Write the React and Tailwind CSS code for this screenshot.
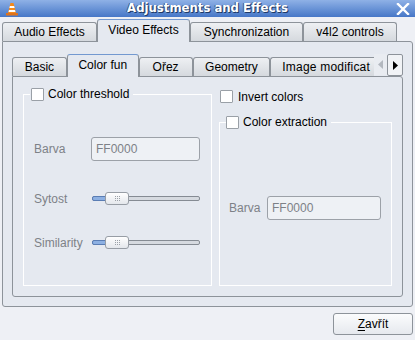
import React from "react";

function VlcIcon() {
  return (
    <svg width="14" height="14" viewBox="0 0 14 14">
      <polygon points="5.5,1 8.5,1 11,11 3,11" fill="#f4891c" />
      <polygon points="4.9,4 9.1,4 9.6,6 4.4,6" fill="#ffffff" />
      <polygon points="4,8 10,8 10.5,10 3.5,10" fill="#ffffff" />
      <rect x="1" y="11" width="12" height="2.5" rx="0.6" fill="#e0731a" />
    </svg>
  );
}

function CloseIcon() {
  return (
    <svg width="14" height="12" viewBox="0 0 14 12">
      <path d="M2 1 L12 11 M12 1 L2 11" stroke="#ffffff" strokeWidth="2.4" strokeLinecap="square" />
    </svg>
  );
}

function Checkbox() {
  return <span className="block h-[13px] w-[13px] shrink-0 rounded-[1px] border border-[#9aa0a7] bg-white" />;
}

function OuterTab({ children, active, className }) {
  if (active) {
    return (
      <div className={`relative z-10 -mb-px flex h-[23px] items-center justify-center rounded-t-[3px] border border-b-0 border-[#8d939a] border-t-[#7399d0] bg-[#e5e9f0] pb-[2px] ${className}`}>
        {children}
      </div>
    );
  }
  return (
    <div className={`flex h-[19px] items-center justify-center rounded-t-[3px] border border-b-0 border-[#8d939a] bg-linear-to-b from-[#eef0f3] to-[#d5d9de] ${className}`}>
      {children}
    </div>
  );
}

function Slider() {
  return (
    <div className="relative h-[13px] w-[108px]">
      <div className="absolute left-0 right-0 top-[4px] h-[5px] rounded-[2px] border border-[#858b93] bg-[#d6dae0]" />
      <div className="absolute left-0 top-[4px] h-[5px] w-[15px] rounded-l-[2px] border border-[#5a7db4] bg-[#8db0e2]" />
      <div className="absolute left-[13px] top-0 flex h-[13px] w-[24px] items-center justify-center rounded-[3px] border border-[#979da5] bg-linear-to-b from-white to-[#e4e7ec]">
        <div className="grid grid-cols-3 gap-[1px]">
          {Array.from({ length: 9 }).map((_, i) => (
            <span key={i} className="block h-[1px] w-[1px] bg-[#9ba1a8]" />
          ))}
        </div>
      </div>
    </div>
  );
}

function TextField({ className }) {
  return (
    <div className={`flex h-[24px] items-center rounded-[3px] border border-[#9ca1a8] bg-[#eef1f5] pl-[4px] text-[#7d8187] ${className}`}>
      FF0000
    </div>
  );
}

export default function App() {
  return (
    <div className="flex h-[340px] w-[415px] flex-col overflow-hidden bg-[#eef0f5] font-['Liberation_Sans',Arial,sans-serif] text-[12px] text-black">
      {/* Title bar */}
      <div className="flex h-[17px] items-center bg-linear-to-b from-[#8fb1e6] to-[#4677c7]">
        <div className="flex w-[22px] justify-center pl-[2px]">
          <VlcIcon />
        </div>
        <div className="flex-1 text-center font-['DejaVu_Sans',sans-serif] text-[11.7px] font-bold text-white [text-shadow:1px_1px_0_#203a66,-1px_0_0_#35578f]">
          Adjustments and Effects
        </div>
        <div className="flex w-[22px] justify-center pr-[2px]">
          <CloseIcon />
        </div>
      </div>

      <div className="flex flex-1 flex-col px-[2px]">
        {/* Outer tabs */}
        <div className="flex h-[24px] items-end">
          <OuterTab className="w-[95px]">Audio Effects</OuterTab>
          <OuterTab active className="w-[93px]">Video Effects</OuterTab>
          <OuterTab className="w-[113px]">Synchronization</OuterTab>
          <OuterTab className="w-[94px]">v4l2 controls</OuterTab>
        </div>

        {/* Outer panel */}
        <div className="flex h-[266px] flex-col rounded-b-[3px] rounded-tr-[3px] border border-[#8d939a] bg-[#e5e9f0] px-[9px] pb-[9px] pt-[11px]">
          {/* Inner tabs */}
          <div className="flex h-[23px] items-end">
            <OuterTab className="w-[55px]">Basic</OuterTab>
            <OuterTab active className="w-[72px]">Color fun</OuterTab>
            <OuterTab className="w-[54px]">Ořez</OuterTab>
            <OuterTab className="w-[78px]">Geometry</OuterTab>
            <div className="flex h-[19px] w-[104px] items-center whitespace-nowrap rounded-tl-[3px] border border-b-0 border-r-0 border-[#8d939a] bg-linear-to-b from-[#eef0f3] to-[#d5d9de] pl-[11px] tracking-[0.2px]">
              Image modificat
            </div>
            <div className="mt-[1px] flex h-[21px] w-[13px] items-center justify-center self-start bg-[#e9ecf1]">
              <svg width="5" height="9" viewBox="0 0 5 9">
                <polygon points="5,0 0,4.5 5,9" fill="#b3b8bf" />
              </svg>
            </div>
            <div className="mt-[1px] flex h-[22px] w-[16px] items-center justify-center self-start rounded-[2px] border border-[#8d939a] bg-[#f1f3f6]">
              <svg width="5" height="9" viewBox="0 0 5 9">
                <polygon points="0,0 5,4.5 0,9" fill="#000000" />
              </svg>
            </div>
          </div>

          {/* Inner panel */}
          <div className="flex h-[221px] gap-[7px] rounded-b-[3px] rounded-tr-[3px] border border-[#8d939a] bg-[#e5e9f0] p-[10px]">
            {/* Color threshold */}
            <fieldset className="flex w-[189px] flex-col border border-white">
              <legend className="ml-[6px] flex h-[14px] items-center gap-[4px] pl-[1px] pr-[4px]">
                <Checkbox />
                <span>Color threshold</span>
              </legend>
              <div className="flex flex-col pl-[10px] text-[#7d8187]">
                <div className="mt-[36px] flex h-[24px] items-center">
                  <span className="w-[57px]">Barva</span>
                  <TextField className="w-[109px]" />
                </div>
                <div className="mt-[31px] flex h-[13px] items-center">
                  <span className="w-[58px]">Sytost</span>
                  <Slider />
                </div>
                <div className="mt-[31px] flex h-[13px] items-center">
                  <span className="w-[58px]">Similarity</span>
                  <Slider />
                </div>
              </div>
            </fieldset>

            {/* Right column */}
            <div className="flex flex-1 flex-col">
              <div className="ml-[1px] mt-[3px] flex h-[13px] items-center gap-[5px]">
                <Checkbox />
                <span>Invert colors</span>
              </div>
              <fieldset className="mt-[12px] flex flex-1 flex-col border border-white">
                <legend className="ml-[6px] flex h-[14px] items-center gap-[4px] pr-[4px]">
                  <Checkbox />
                  <span>Color extraction</span>
                </legend>
                <div className="mt-[67px] flex h-[24px] items-center pl-[9px] text-[#7d8187]">
                  <span className="w-[38px]">Barva</span>
                  <TextField className="w-[114px]" />
                </div>
              </fieldset>
            </div>
          </div>
        </div>

        {/* Bottom button */}
        <div className="mt-[6px] flex justify-end">
          <button className="flex h-[22px] w-[80px] items-center justify-center rounded-[3px] border border-[#8d939a] bg-linear-to-b from-[#fbfcfd] to-[#e6e9ee] text-[12px]">
            <span>
              <span className="underline underline-offset-2">Z</span>avřít
            </span>
          </button>
        </div>
      </div>
    </div>
  );
}
